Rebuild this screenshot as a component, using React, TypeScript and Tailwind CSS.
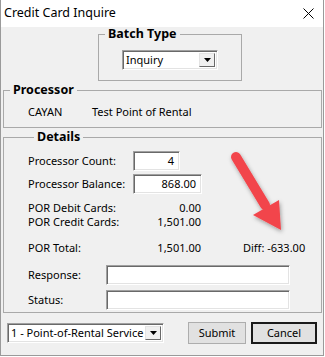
import type { ReactNode } from 'react'

const sunken =
  'bg-white border border-t-[#a0a0a0] border-l-[#a0a0a0] border-r-white border-b-white shadow-[inset_1px_1px_0_#696969,inset_-1px_-1px_0_#e3e3e3]'

function Caret() {
  return (
    <svg width="7" height="4" viewBox="0 0 7 4">
      <path d="M0 0h7L3.5 4z" fill="#000" />
    </svg>
  )
}

function Combo({ text, className }: { text: string; className: string }) {
  return (
    <div className={`${sunken} ${className} flex items-stretch p-[2px] overflow-hidden`}>
      <div className="flex-1 whitespace-nowrap pl-[1px] leading-[14px]">{text}</div>
      <div className="w-[16px] flex items-center justify-center bg-[#f0f0f0] border border-t-[#e3e3e3] border-l-[#e3e3e3] border-r-[#696969] border-b-[#696969]">
        <Caret />
      </div>
    </div>
  )
}

function Group({ title, className, children }: { title: string; className: string; children: ReactNode }) {
  return (
    <fieldset className={`border border-[#a9a9a9] ${className}`}>
      <legend className="ml-[6px] px-[3px] font-bold text-[12.5px] leading-[14px]">{title}</legend>
      {children}
    </fieldset>
  )
}

function Field({ label, width, labelWidth, value, className }: { label: string; width: string; labelWidth: string; value?: string; className: string }) {
  return (
    <div className={`flex items-center h-[20px] ${className}`}>
      <span className={labelWidth}>{label}</span>
      <div className={`${sunken} ${width} h-[20px] text-right pr-[5px] leading-[18px]`}>{value}</div>
    </div>
  )
}

function Row({ label, value, className, extra }: { label: string; value: string; className: string; extra?: string }) {
  return (
    <div className={`flex h-[14px] leading-[14px] ${className}`}>
      <span className="w-[105px]">{label}</span>
      <span className="w-[68px] text-right">{value}</span>
      {extra && <span className="ml-[42px]">{extra}</span>}
    </div>
  )
}

export default function App() {
  return (
    <div className="relative w-[324px] h-[356px] flex flex-col border-x border-b border-[#9a9a9a] text-[11px] text-black font-['Noto_Sans','Liberation_Sans',sans-serif]">
      <div className="h-[27px] bg-white flex items-center justify-between pl-[3px] pr-[9px] text-[12.5px]">
        <span>Credit Card Inquire</span>
        <svg width="11" height="11" viewBox="0 0 11 11">
          <path d="M0.5 0.5l10 10M10.5 0.5l-10 10" stroke="#000" strokeWidth="1" />
        </svg>
      </div>

      <div className="flex-1 bg-[#f0f0f0] pl-[1px] flex flex-col">
        <Group title="Batch Type" className="ml-[96px] w-[144px] pb-[10px]">
          <Combo text="Inquiry" className="ml-[23px] mt-[9px] w-[96px] h-[20px]" />
        </Group>

        <Group title="Processor" className="mt-[2px] ml-[1px] w-[319px] pb-[8px]">
          <div className="flex mt-[8px] h-[14px] leading-[14px] pl-[24px]">
            <span className="w-[64px]">CAYAN</span>
            <span>Test Point of Rental</span>
          </div>
        </Group>

        <Group title="Details" className="mt-[2px] ml-[1px] w-[319px] pb-[2px] pl-[24px]">
          <Field label="Processor Count:" labelWidth="w-[105px]" width="w-[47px]" value="4" className="mt-[7px]" />
          <Field label="Processor Balance:" labelWidth="w-[105px]" width="w-[69px]" value="868.00" className="mt-[3px]" />
          <Row label="POR Debit Cards:" value="0.00" className="mt-[7px]" />
          <Row label="POR Credit Cards:" value="1,501.00" className="" />
          <Row label="POR Total:" value="1,501.00" className="mt-[12px]" extra="Diff: -633.00" />
          <Field label="Response:" labelWidth="w-[78px]" width="w-[184px]" className="mt-[10px]" />
          <Field label="Status:" labelWidth="w-[78px]" width="w-[184px]" className="mt-[5px]" />
        </Group>

        <div className="flex items-center mt-[9px] h-[22px]">
          <Combo text="1 - Point-of-Rental Service" className="ml-[5px] w-[157px] h-[20px]" />
          <button className="ml-[24px] w-[58px] h-[22px] bg-[#e1e1e1] border border-[#adadad]">Submit</button>
          <button className="ml-[5px] w-[66px] h-[22px] bg-[#e1e1e1] border-2 border-[#1a1a1a]">Cancel</button>
        </div>
      </div>

      {/* red callout arrow pointing at the diff */}
      <svg className="absolute left-[220px] top-[145px]" width="70" height="95" viewBox="0 0 70 95">
        <defs>
          <filter id="sh" x="-30%" y="-30%" width="160%" height="160%">
            <feDropShadow dx="1" dy="2" stdDeviation="2" floodColor="#000" floodOpacity="0.35" />
          </filter>
        </defs>
        <g filter="url(#sh)" fill="#f2454b">
          <line x1="15" y1="12" x2="44" y2="60" stroke="#f2454b" strokeWidth="10" strokeLinecap="round" />
          <path d="M32 70L58 55L60 85z" />
        </g>
      </svg>
    </div>
  )
}
